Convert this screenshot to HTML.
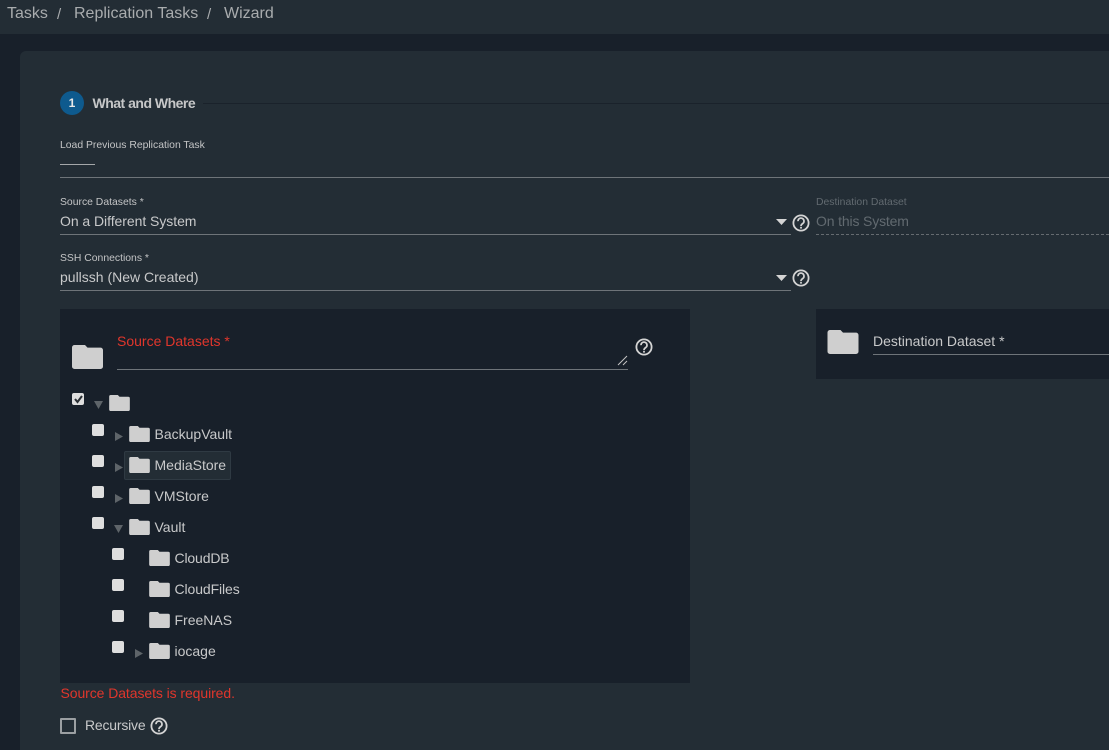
<!DOCTYPE html>
<html><head><meta charset="utf-8"><style>
html,body{margin:0;padding:0;width:1109px;height:750px;overflow:hidden;background:#18202a;font-family:"Liberation Sans",sans-serif;color:#cfd0d1}
#w{position:absolute;left:0;top:0;width:1109px;height:750px;overflow:hidden}
.a{position:absolute;white-space:nowrap}
.l{position:absolute;height:1px;background:#6e7479}
.t{font-size:14px;line-height:16px;color:#c8c9ca}
.s{font-size:10.4px;line-height:12px;color:#c4c5c6}
.r{color:#e0362c}
.cb{position:absolute;width:12px;height:12px;background:#dedede;border-radius:2px}
svg{position:absolute;overflow:visible}
</style></head><body><div id="w">
<svg width="0" height="0" style="position:absolute"><defs>
<symbol id="f" viewBox="0 0 31 24"><path d="M2.5 0H13L15.5 2.6H28.5A2.5 2.5 0 0 1 31 5.1V21.5A2.5 2.5 0 0 1 28.5 24H2.5A2.5 2.5 0 0 1 0 21.5V2.5A2.5 2.5 0 0 1 2.5 0Z" fill="#cfcfcf"/></symbol>
<symbol id="q" viewBox="0 0 18 18"><circle cx="9" cy="9" r="7.6" fill="none" stroke="#d4d4d4" stroke-width="1.8"/><path d="M6 7.2A3 3 0 1 1 10.8 9.5C9.6 10.3 9 10.8 9 12" fill="none" stroke="#d4d4d4" stroke-width="1.7"/><rect x="8.1" y="12.8" width="1.8" height="1.8" fill="#d4d4d4"/></symbol>
</defs></svg>

<div class="a" style="left:0;top:0;width:1109px;height:34px;background:#232d35"></div>
<div class="a" style="left:7px;top:5px;font-size:16px;line-height:18px;color:#a9acae">Tasks</div>
<div class="a" style="left:57px;top:6px;font-size:15px;line-height:18px;color:#a9acae">/</div>
<div class="a" style="left:74px;top:5px;font-size:16px;line-height:18px;color:#a9acae">Replication Tasks</div>
<div class="a" style="left:207px;top:6px;font-size:15px;line-height:18px;color:#a9acae">/</div>
<div class="a" style="left:224px;top:5px;font-size:16px;line-height:18px;color:#a9acae">Wizard</div>

<div class="a" style="left:20px;top:51px;width:1100px;height:699px;background:#232d35;border-radius:6px 6px 0 0"></div>

<div class="a" style="left:60px;top:91px;width:24px;height:24px;border-radius:50%;background:#0e5a8e;color:#e8e8e8;font-size:12px;font-weight:bold;line-height:24px;text-align:center">1</div>
<div class="a" style="left:92.5px;top:95px;font-size:14px;line-height:16px;font-weight:bold;color:#c6c7c8;letter-spacing:-.5px">What and Where</div>
<div class="l" style="left:203px;top:103px;width:906px;background:#1a222b"></div>

<div class="a s" style="left:60px;top:140px">Load Previous Replication Task</div>
<div class="a" style="left:60px;top:164px;width:35px;height:1px;background:#a4a7a9"></div>
<div class="l" style="left:60px;top:177px;width:1049px"></div>

<div class="a s" style="left:60px;top:197px">Source Datasets *</div>
<div class="a t" style="left:60px;top:213px;letter-spacing:-.05px">On a Different System</div>
<svg style="left:776px;top:218.5px" width="11" height="6"><path d="M0 0H11L5.5 6Z" fill="#d4d4d4"/></svg>
<div class="l" style="left:60px;top:234px;width:731px"></div>
<svg style="left:792px;top:214px" width="18" height="18"><use href="#q"/></svg>

<div class="a s" style="left:816px;top:197px;color:#626a70">Destination Dataset</div>
<div class="a t" style="left:816px;top:213px;color:#626a70;letter-spacing:-.15px">On this System</div>
<div class="a" style="left:816px;top:234px;width:293px;border-top:1px dashed #656b70"></div>

<div class="a s" style="left:60px;top:253px">SSH Connections *</div>
<div class="a t" style="left:60px;top:269px">pullssh (New Created)</div>
<svg style="left:776px;top:274.5px" width="11" height="6"><path d="M0 0H11L5.5 6Z" fill="#d4d4d4"/></svg>
<div class="l" style="left:60px;top:290px;width:731px"></div>
<svg style="left:792px;top:269px" width="18" height="18"><use href="#q"/></svg>

<div class="a" style="left:60px;top:309px;width:630px;height:374px;background:#18202a"></div>
<svg style="left:72px;top:345px" width="31" height="24"><use href="#f"/></svg>
<div class="a t r" style="left:117px;top:333px">Source Datasets *</div>
<svg style="left:618px;top:355px" width="10" height="11"><path d="M0 10L9 1M5 10L9 6" stroke="#c4c4c4" stroke-width="1" fill="none"/></svg>
<div class="l" style="left:117px;top:369px;width:511px"></div>
<svg style="left:635px;top:338px" width="18" height="18"><use href="#q"/></svg>

<div class="a" style="left:816px;top:309px;width:293px;height:70px;background:#18202a"></div>
<svg style="left:827px;top:330px" width="32" height="24"><use href="#f"/></svg>
<div class="a t" style="left:873px;top:333px">Destination Dataset *</div>
<div class="l" style="left:873px;top:354px;width:236px"></div>

<div class="cb" style="left:72px;top:393px"></div>
<svg style="left:74px;top:395px" width="9" height="8"><path d="M1 4L3.5 7L8 1" fill="none" stroke="#2a2f34" stroke-width="2"/></svg>
<svg style="left:94px;top:401px" width="9" height="8"><path d="M0 0H9L4.5 8Z" fill="#5e6469"/></svg>
<svg style="left:109px;top:395px" width="21" height="16"><use href="#f"/></svg>

<div class="cb" style="left:92px;top:424px"></div>
<svg style="left:115px;top:432px" width="8" height="9"><path d="M0 0L8 4.5L0 9Z" fill="#5e6469"/></svg>
<svg style="left:129px;top:426px" width="21" height="16"><use href="#f"/></svg>
<div class="a t" style="left:154.5px;top:426px">BackupVault</div>

<div class="cb" style="left:92px;top:455px"></div>
<svg style="left:115px;top:463px" width="8" height="9"><path d="M0 0L8 4.5L0 9Z" fill="#5e6469"/></svg>
<div class="a" style="left:124px;top:451px;width:105px;height:27px;background:#232d35;border:1px solid #2f3a43;border-radius:2px"></div>
<svg style="left:129px;top:457px" width="21" height="16"><use href="#f"/></svg>
<div class="a t" style="left:154.5px;top:457px">MediaStore</div>

<div class="cb" style="left:92px;top:486px"></div>
<svg style="left:115px;top:494px" width="8" height="9"><path d="M0 0L8 4.5L0 9Z" fill="#5e6469"/></svg>
<svg style="left:129px;top:488px" width="21" height="16"><use href="#f"/></svg>
<div class="a t" style="left:154.5px;top:488px">VMStore</div>

<div class="cb" style="left:92px;top:517px"></div>
<svg style="left:114px;top:525px" width="9" height="8"><path d="M0 0H9L4.5 8Z" fill="#5e6469"/></svg>
<svg style="left:129px;top:519px" width="21" height="16"><use href="#f"/></svg>
<div class="a t" style="left:154.5px;top:519px">Vault</div>

<div class="cb" style="left:112px;top:548px"></div>
<svg style="left:149px;top:550px" width="21" height="16"><use href="#f"/></svg>
<div class="a t" style="left:174.5px;top:550px;letter-spacing:-.15px">CloudDB</div>

<div class="cb" style="left:112px;top:579px"></div>
<svg style="left:149px;top:581px" width="21" height="16"><use href="#f"/></svg>
<div class="a t" style="left:174.5px;top:581px;letter-spacing:-.1px">CloudFiles</div>

<div class="cb" style="left:112px;top:610px"></div>
<svg style="left:149px;top:612px" width="21" height="16"><use href="#f"/></svg>
<div class="a t" style="left:174.5px;top:612px">FreeNAS</div>

<div class="cb" style="left:112px;top:641px"></div>
<svg style="left:135px;top:649px" width="8" height="9"><path d="M0 0L8 4.5L0 9Z" fill="#5e6469"/></svg>
<svg style="left:149px;top:643px" width="21" height="16"><use href="#f"/></svg>
<div class="a t" style="left:174.5px;top:643px">iocage</div>

<div class="a t r" style="left:60.5px;top:685px;letter-spacing:-.08px">Source Datasets is required.</div>

<div class="a" style="left:60px;top:718px;width:12px;height:12px;border:2px solid #9b9fa2;border-radius:1px"></div>
<div class="a t" style="left:85px;top:717px;letter-spacing:-.2px">Recursive</div>
<svg style="left:150px;top:717px" width="18" height="18"><use href="#q"/></svg>
</div></body></html>
